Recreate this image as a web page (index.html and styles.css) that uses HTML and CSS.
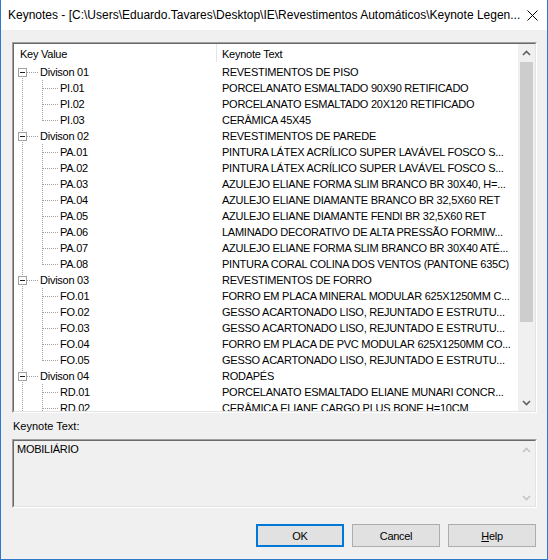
FILE: index.html
```html
<!DOCTYPE html>
<html>
<head>
<meta charset="utf-8">
<link rel="stylesheet" href="styles.css">
</head>
<body>
<div class="window">
  <div class="titlebar">
    <span class="title">Keynotes - [C:\Users\Eduardo.Tavares\Desktop\IE\Revestimentos Automáticos\Keynote Legen...</span>
    <svg class="close" width="11" height="11" viewBox="0 0 11 11"><path d="M0.5 0.5 L10.5 10.5 M10.5 0.5 L0.5 10.5" stroke="#000" stroke-width="1"/></svg>
  </div>
  <div class="content">
    <div class="sunken">
      <div class="sunken-in listbox">
        <div class="listmain">
          <div class="lhead">
            <div class="hc hk">Key Value</div>
            <div class="hc ht">Keynote Text</div>
          </div>
          <div class="rows">
            <div class="row grp first"><div class="k"><span class="exp"></span><span>Divison 01</span></div><div class="t">REVESTIMENTOS DE PISO</div></div>
            <div class="row leaf"><div class="k">PI.01</div><div class="t">PORCELANATO ESMALTADO 90X90 RETIFICADO</div></div>
            <div class="row leaf"><div class="k">PI.02</div><div class="t">PORCELANATO ESMALTADO 20X120 RETIFICADO</div></div>
            <div class="row leaf last"><div class="k">PI.03</div><div class="t">CERÂMICA 45X45</div></div>
            <div class="row grp"><div class="k"><span class="exp"></span><span>Divison 02</span></div><div class="t">REVESTIMENTOS DE PAREDE</div></div>
            <div class="row leaf"><div class="k">PA.01</div><div class="t">PINTURA LÁTEX ACRÍLICO SUPER LAVÁVEL FOSCO S...</div></div>
            <div class="row leaf"><div class="k">PA.02</div><div class="t">PINTURA LÁTEX ACRÍLICO SUPER LAVÁVEL FOSCO S...</div></div>
            <div class="row leaf"><div class="k">PA.03</div><div class="t">AZULEJO ELIANE FORMA SLIM BRANCO BR 30X40, H=...</div></div>
            <div class="row leaf"><div class="k">PA.04</div><div class="t">AZULEJO ELIANE DIAMANTE BRANCO BR 32,5X60 RET</div></div>
            <div class="row leaf"><div class="k">PA.05</div><div class="t">AZULEJO ELIANE DIAMANTE FENDI BR 32,5X60 RET</div></div>
            <div class="row leaf"><div class="k">PA.06</div><div class="t">LAMINADO DECORATIVO DE ALTA PRESSÃO FORMIW...</div></div>
            <div class="row leaf"><div class="k">PA.07</div><div class="t">AZULEJO ELIANE FORMA SLIM BRANCO BR 30X40 ATÉ...</div></div>
            <div class="row leaf last"><div class="k">PA.08</div><div class="t">PINTURA CORAL COLINA DOS VENTOS (PANTONE 635C)</div></div>
            <div class="row grp"><div class="k"><span class="exp"></span><span>Divison 03</span></div><div class="t">REVESTIMENTOS DE FORRO</div></div>
            <div class="row leaf"><div class="k">FO.01</div><div class="t">FORRO EM PLACA MINERAL MODULAR 625X1250MM C...</div></div>
            <div class="row leaf"><div class="k">FO.02</div><div class="t">GESSO ACARTONADO LISO, REJUNTADO E ESTRUTU...</div></div>
            <div class="row leaf"><div class="k">FO.03</div><div class="t">GESSO ACARTONADO LISO, REJUNTADO E ESTRUTU...</div></div>
            <div class="row leaf"><div class="k">FO.04</div><div class="t">FORRO EM PLACA DE PVC MODULAR 625X1250MM CO...</div></div>
            <div class="row leaf last"><div class="k">FO.05</div><div class="t">GESSO ACARTONADO LISO, REJUNTADO E ESTRUTU...</div></div>
            <div class="row grp"><div class="k"><span class="exp"></span><span>Divison 04</span></div><div class="t">RODAPÉS</div></div>
            <div class="row leaf"><div class="k">RD.01</div><div class="t">PORCELANATO ESMALTADO ELIANE MUNARI CONCR...</div></div>
            <div class="row leaf"><div class="k">RD.02</div><div class="t">CERÂMICA ELIANE CARGO PLUS BONE H=10CM</div></div>
          </div>
        </div>
        <div class="vscroll">
          <div class="sbtn"><svg width="9" height="6" viewBox="0 0 9 6"><polyline points="1,5 4.5,1.5 8,5" fill="none" stroke="#606060" stroke-width="1.6"/></svg></div>
          <div class="track"><div class="thumb"></div></div>
          <div class="sbtn"><svg width="9" height="6" viewBox="0 0 9 6"><polyline points="1,1 4.5,4.5 8,1" fill="none" stroke="#606060" stroke-width="1.6"/></svg></div>
        </div>
      </div>
    </div>
    <div class="label">Keynote Text:</div>
    <div class="sunken memo-outer">
      <div class="sunken-in memo">
        <div class="memotext">MOBILIÁRIO</div>
        <div class="vscroll dis">
          <div class="sbtn"><svg width="9" height="6" viewBox="0 0 9 6"><polyline points="1,5 4.5,1.5 8,5" fill="none" stroke="#c4c4c4" stroke-width="1.6"/></svg></div>
          <div class="track"></div>
          <div class="sbtn"><svg width="9" height="6" viewBox="0 0 9 6"><polyline points="1,1 4.5,4.5 8,1" fill="none" stroke="#c4c4c4" stroke-width="1.6"/></svg></div>
        </div>
      </div>
    </div>
    <div class="buttons">
      <div class="btn default">OK</div>
      <div class="btn">Cancel</div>
      <div class="btn"><u>H</u>elp</div>
    </div>
  </div>
</div>
</body>
</html>
```

FILE: styles.css
```css
* { box-sizing: border-box; }
html, body { margin: 0; padding: 0; }
body {
  width: 548px;
  height: 560px;
  overflow: hidden;
  background: #f0f0f0;
  font-family: "Liberation Sans", Arial, sans-serif;
  font-size: 11px;
  color: #000;
}
.window {
  width: 548px;
  height: 560px;
  border: 1px solid #2b79ca;
  border-top: 0;
  background: #f0f0f0;
  display: flex;
  flex-direction: column;
}
.titlebar {
  height: 30px;
  flex: none;
  background: #fff;
  display: flex;
  align-items: center;
  padding-left: 7px;
  padding-right: 9px;
}
.title {
  flex: 1;
  font-size: 12px;
  letter-spacing: 0;
  white-space: nowrap;
  overflow: hidden;
}
.close { flex: none; margin-left: 4px; }
.content {
  flex: 1;
  padding: 12px 10px 0 11px;
  display: flex;
  flex-direction: column;
}
.sunken {
  border: 1px solid;
  border-color: #a0a0a0 #ffffff #ffffff #a0a0a0;
}
.sunken-in {
  border: 1px solid;
  border-color: #696969 #e3e3e3 #e3e3e3 #696969;
}
.listbox {
  height: 369px;
  background: #fff;
  display: flex;
  overflow: hidden;
}
.listmain {
  flex: 1;
  overflow: hidden;
  letter-spacing: -0.25px;
}
.lhead {
  height: 20px;
  display: grid;
  grid-template-columns: 202px 1fr;
}
.hc { line-height: 20px; white-space: nowrap; }
.hk { padding-left: 6px; }
.ht {
  background: linear-gradient(#e5e5e5, #e5e5e5) no-repeat 0 0 / 1px 18px;
  padding-left: 6px;
}
.row {
  height: 16px;
  display: grid;
  grid-template-columns: 202px 1fr;
  line-height: 16px;
  white-space: nowrap;
}
.t { padding-left: 6px; overflow: hidden; }
.k {
  display: flex;
  align-items: center;
  background-repeat: no-repeat;
}
.grp .k {
  background-image:
    repeating-linear-gradient(to bottom, #a0a0a0 0 1px, transparent 1px 2px),
    repeating-linear-gradient(to right, #a0a0a0 0 1px, transparent 1px 2px);
  background-size: 1px 16px, 11px 1px;
  background-position: 8px 0, 13px 8px;
}
.grp.first .k {
  background-size: 1px 8px, 11px 1px;
  background-position: 8px 8px, 13px 8px;
}
.exp {
  width: 9px;
  height: 9px;
  margin-left: 4px;
  margin-right: 13px;
  border: 1px solid #a0a0a0;
  background: #fff linear-gradient(#222, #222) no-repeat 1px 3px / 5px 1px;
  flex: none;
}
.leaf .k {
  padding-left: 46px;
  background-image:
    repeating-linear-gradient(to bottom, #a0a0a0 0 1px, transparent 1px 2px),
    repeating-linear-gradient(to bottom, #a0a0a0 0 1px, transparent 1px 2px),
    repeating-linear-gradient(to right, #a0a0a0 0 1px, transparent 1px 2px);
  background-size: 1px 16px, 1px 16px, 15px 1px;
  background-position: 8px 0, 28px 0, 29px 8px;
}
.leaf.last .k {
  background-size: 1px 16px, 1px 9px, 15px 1px;
}
.vscroll {
  width: 17px;
  flex: none;
  background: #f0f0f0;
  display: flex;
  flex-direction: column;
}
.sbtn {
  height: 17px;
  flex: none;
  display: flex;
  align-items: center;
  justify-content: center;
}
.track {
  flex: 1;
  padding: 1px 2px;
}
.thumb {
  height: 260px;
  background: #cdcdcd;
}
.label {
  margin-top: 6px;
  height: 15px;
  line-height: 15px;
  padding-left: 1px;
}
.memo-outer { margin-top: 5px; }
.memo {
  height: 67px;
  display: flex;
  background: #f0f0f0;
}
.memotext {
  flex: 1;
  padding: 1px 0 0 3px;
  letter-spacing: -0.25px;
  line-height: 14px;
}
.buttons {
  margin-top: 16px;
  display: flex;
  justify-content: flex-end;
  gap: 8px;
  padding-right: 1px;
}
.btn {
  width: 88px;
  height: 23px;
  border: 1px solid #adadad;
  background: #e1e1e1;
  display: flex;
  align-items: center;
  justify-content: center;
  letter-spacing: -0.3px;
}
.btn.default {
  border: 2px solid #0078d7;
}
```
